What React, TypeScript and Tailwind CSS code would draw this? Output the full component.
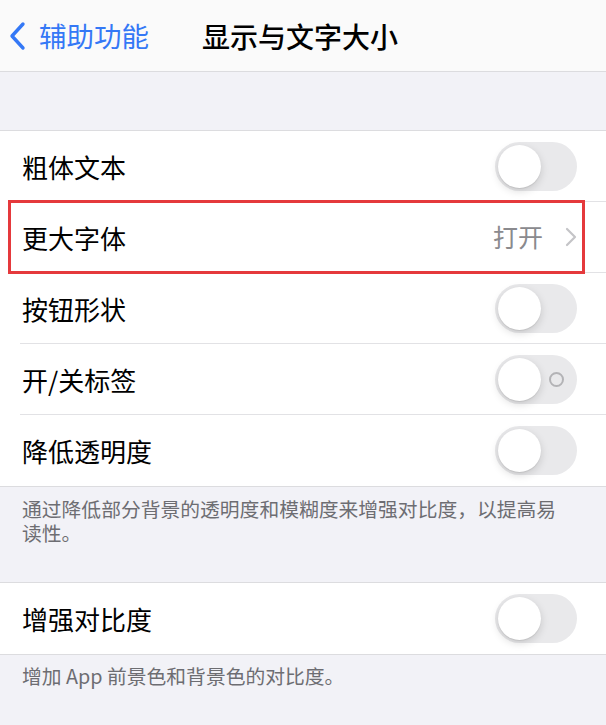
import { ReactNode } from 'react';

const font = { fontFamily: '"Noto Sans CJK SC", "Noto Sans", sans-serif' };

function Toggle({ showLabel }: { showLabel?: boolean }) {
  return (
    <div className="relative w-[82px] h-[49px] rounded-full bg-[#e9e9eb] shrink-0">
      {showLabel && (
        <div className="absolute right-[13px] top-[17px] w-[15px] h-[15px] rounded-full border-2 border-[#b3b3b6]" />
      )}
      <div className="absolute left-[3px] top-[3px] w-[43px] h-[43px] rounded-full bg-white shadow-[0_3px_8px_rgba(0,0,0,0.15),0_1px_1px_rgba(0,0,0,0.08)]" />
    </div>
  );
}

function Row({ label, last, children }: { label: string; last?: boolean; children: ReactNode }) {
  return (
    <div className="flex h-[71px] items-stretch pl-[20px] bg-white">
      <div
        className={
          'flex flex-1 items-center justify-between pl-[2px] pr-[29px] ' +
          (last ? '' : 'border-b border-[#e2e2e5]')
        }
      >
        <span className="text-[26px] text-black">{label}</span>
        {children}
      </div>
    </div>
  );
}

export default function App() {
  return (
    <div className="w-[606px] h-[725px] bg-[#f2f2f7] overflow-hidden" style={font}>
      <header className="flex h-[72px] items-center bg-[#fafafa] border-b border-[#dcdcdf]">
        <svg className="ml-[8px] w-[20px] h-[30px]" viewBox="0 0 20 30" fill="none">
          <path d="M15 3 L4 15 L15 27" stroke="#3478f6" strokeWidth="3.4" strokeLinecap="round" strokeLinejoin="round" />
        </svg>
        <span className="ml-[11px] text-[27.5px] text-[#3478f6]">辅助功能</span>
        <span className="ml-[53px] text-[28px] font-medium text-black">显示与文字大小</span>
      </header>

      <div className="h-[58px]" />

      <section className="border-t border-b border-[#dcdcdf]">
        <Row label="粗体文本">
          <Toggle />
        </Row>
        <div className="relative">
          <Row label="更大字体">
            <div className="flex items-center gap-[22px]">
              <span className="text-[25px] text-[#8a8a8e]">打开</span>
              <svg className="w-[12px] h-[20px]" viewBox="0 0 12 20" fill="none">
                <path d="M2 2 L10 10 L2 18" stroke="#c4c4c7" strokeWidth="2.2" strokeLinecap="round" strokeLinejoin="round" />
              </svg>
            </div>
          </Row>
          <div className="absolute left-[8px] right-[21px] -top-[2px] -bottom-[1px] border-[3px] border-[#e5393c] pointer-events-none" />
        </div>
        <Row label="按钮形状">
          <Toggle />
        </Row>
        <Row label="开/关标签">
          <Toggle showLabel />
        </Row>
        <Row label="降低透明度" last>
          <Toggle />
        </Row>
      </section>

      <p className="h-[95px] pl-[22px] pr-[44px] pt-[10px] text-[19.8px] leading-[24px] text-[#6d6d72]">
        通过降低部分背景的透明度和模糊度来增强对比度，以提高易读性。
      </p>

      <section className="border-t border-b border-[#dcdcdf]">
        <Row label="增强对比度" last>
          <Toggle />
        </Row>
      </section>

      <p className="pl-[22px] pt-[9px] text-[19.8px] leading-[24px] text-[#6d6d72]">
        增加 App 前景色和背景色的对比度。
      </p>
    </div>
  );
}
